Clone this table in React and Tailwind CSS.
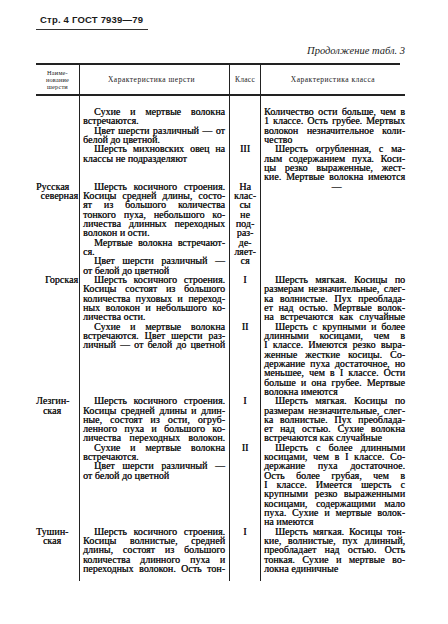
const p = (lines, opts = {}) => ({ lines, indent: !opts.ni, full: !!opts.full });

const rows = [
  {
    name: [],
    text: [p(["Сухие и мертвые волокна", "встречаются."]), p(["Цвет шерсти различный — от", "белой до цветной."])],
    cls: [],
    desc: [p(["Количество ости больше, чем в", "1 классе. Ость грубее. Мертвых", "волокон незначительное коли-", "чество"], { ni: true })],
    top: true,
  },
  {
    name: [],
    text: [p(["Шерсть михновских овец на", "классы не подразделяют"])],
    cls: ["III"],
    desc: [p(["Шерсть огрубленная, с ма-", "лым содержанием пуха. Коси-", "цы резко выраженные, жест-", "кие. Мертвые волокна имеются"], { full: true })],
  },
  {
    name: [["Русская", "pr-[11px] text-center"], ["северная", "text-right"]],
    text: [
      p(["Шерсть косичного строения.", "Косицы средней длины, состо-", "ят из большого количества", "тонкого пуха, небольшого ко-", "личества длинных переходных", "волокон и ости."]),
      p(["Мертвые волокна встречают-", "ся."]),
      p(["Цвет шерсти различный —", "от белой до цветной"]),
    ],
    cls: ["На", "клас-", "сы", "не", "под-", "раз-", "де-", "ляет-", "ся"],
    desc: "dash",
  },
  {
    name: [["Горская", "text-right"]],
    text: [p(["Шерсть косичного строения.", "Косицы состоят из большого", "количества пуховых и переход-", "ных волокон и небольшого ко-", "личества ости."])],
    cls: ["I"],
    desc: [p(["Шерсть мягкая. Косицы по", "размерам незначительные, слег-", "ка волнистые. Пух преоблада-", "ет над остью. Мертвые волок-", "на встречаются как случайные"], { full: true })],
  },
  {
    name: [],
    text: [p(["Сухие и мертвые волокна", "встречаются. Цвет шерсти раз-", "личный — от белой до цветной"], { full: true })],
    cls: ["II"],
    desc: [p(["Шерсть с крупными и более", "длинными косицами, чем в", "I классе. Имеются резко выра-", "женные жесткие косицы. Со-", "держание пуха достаточное, но", "меньшее, чем в I классе. Ости", "больше и она грубее. Мертвые", "волокна имеются"])],
  },
  {
    name: [["Лезгин-", "pr-[10px] text-center"], ["ская", "pr-[10px] text-center"]],
    text: [p(["Шерсть косичного строения.", "Косицы средней длины и длин-", "ные, состоят из ости, огруб-", "ленного пуха и большого ко-", "личества переходных волокон."], { full: true })],
    cls: ["I"],
    desc: [p(["Шерсть мягкая. Косицы по", "размерам незначительные, слег-", "ка волнистые. Пух преоблада-", "ет над остью. Сухие волокна", "встречаются как случайные"])],
  },
  {
    name: [],
    text: [p(["Сухие и мертвые волокна", "встречаются."]), p(["Цвет шерсти различный —", "от белой до цветной"])],
    cls: ["II"],
    desc: [p(["Шерсть с более длинными", "косицами, чем в I классе. Со-", "держание пуха достаточное.", "Ость более грубая, чем в", "I классе. Имеется шерсть с", "крупными резко выраженными", "косицами, содержащими мало", "пуха. Сухие и мертвые волок-", "на имеются"])],
  },
  {
    name: [["Тушин-", "pr-[12px] text-center"], ["ская", "pr-[10px] text-center"]],
    text: [p(["Шерсть косичного строения.", "Косицы волнистые, средней", "длины, состоят из большого", "количества длинного пуха и", "переходных волокон. Ость тон-"], { full: true })],
    cls: ["I"],
    desc: [p(["Шерсть мягкая. Косицы тон-", "кие, волнистые, пух длинный,", "преобладает над остью. Ость", "тонкая. Сухие и мертвые во-", "локна единичные"])],
    bottom: true,
  },
];

function Para({ para }) {
  return (
    <div>
      {para.lines.map((t, i) => {
        const last = i === para.lines.length - 1;
        const justify = !last || para.full;
        return (
          <div
            key={i}
            className={`whitespace-nowrap leading-[9.33px] h-[9.33px] ${i === 0 && para.indent ? "pl-[11px]" : ""} ${
              justify ? "text-justify [text-align-last:justify]" : "text-left"
            }`}
          >
            {t}
          </div>
        );
      })}
    </div>
  );
}

function Row({ row }) {
  const pad = `${row.top ? "pt-[11px]" : ""} ${row.bottom ? "pb-[8px]" : ""}`;
  const line = "border-r-[1.5px] border-[#222]";
  return (
    <>
      <div className={`${line} ${pad} pr-[1px]`}>
        {row.name.map(([t, c], i) => (
          <div key={i} className={`whitespace-nowrap leading-[9.33px] h-[9.33px] ${c}`}>{t}</div>
        ))}
      </div>
      <div className={`${line} ${pad} pl-[3px] pr-[4px]`}>
        {row.text.map((para, i) => <Para key={i} para={para} />)}
      </div>
      <div className={`${line} ${pad} text-center`}>
        {row.cls.map((t, i) => (
          <div key={i} className="leading-[9.33px] h-[9.33px]">{t}</div>
        ))}
      </div>
      <div className={`${pad} pl-[3px]`}>
        {row.desc === "dash" ? (
          <div className="leading-[9.33px] h-[9.33px] text-center pl-[4px]">—</div>
        ) : (
          row.desc.map((para, i) => <Para key={i} para={para} />)
        )}
      </div>
    </>
  );
}

export default function App() {
  return (
    <div className="w-[448px] h-[624px] bg-white text-[#1a1a1a] font-['Liberation_Serif',serif] overflow-hidden">
      {/* колонтитул */}
      <div className="pt-[14px] ml-[36px] w-[112px] border-b-[1.5px] border-[#333] pb-[3px]">
        <div className="pl-[4px] text-[9.5px] leading-[12px] font-['Liberation_Sans',sans-serif] tracking-[0.2px]">
          <span className="font-semibold">Стр. 4 </span>
          <span className="font-bold">ГОСТ 7939—79</span>
        </div>
      </div>

      <div className="mt-[15px] w-[405px] text-right italic text-[10.5px] leading-[12px]">
        Продолжение табл. 3
      </div>

      {/* таблица */}
      <div className="mt-[6px] ml-[36px] w-[369px]">
        <div className="w-[364px] h-[2px] bg-[#222]" />
        <div className="grid grid-cols-[44px_150px_31px_144px] border-b-2 border-[#222] h-[31px] text-[7.5px] leading-[7px] tracking-[0.5px]">
          <div className="border-r-[1.5px] border-[#222] flex flex-col items-center justify-center text-[6.3px] leading-[7px] tracking-[0.2px]">
            <div>Наиме-</div>
            <div>нование</div>
            <div>шерсти</div>
          </div>
          <div className="border-r-[1.5px] border-[#222] flex items-center justify-center pr-[6px]">Характеристика шерсти</div>
          <div className="border-r-[1.5px] border-[#222] flex items-center justify-center tracking-[0.3px]">Класс</div>
          <div className="flex items-center justify-center">Характеристика класса</div>
        </div>

        <div className="grid grid-cols-[44px_150px_31px_144px] text-[10px] [text-shadow:0.25px_0_0_#1a1a1a]">
          {rows.map((row, i) => <Row key={i} row={row} />)}
        </div>
      </div>
    </div>
  );
}
